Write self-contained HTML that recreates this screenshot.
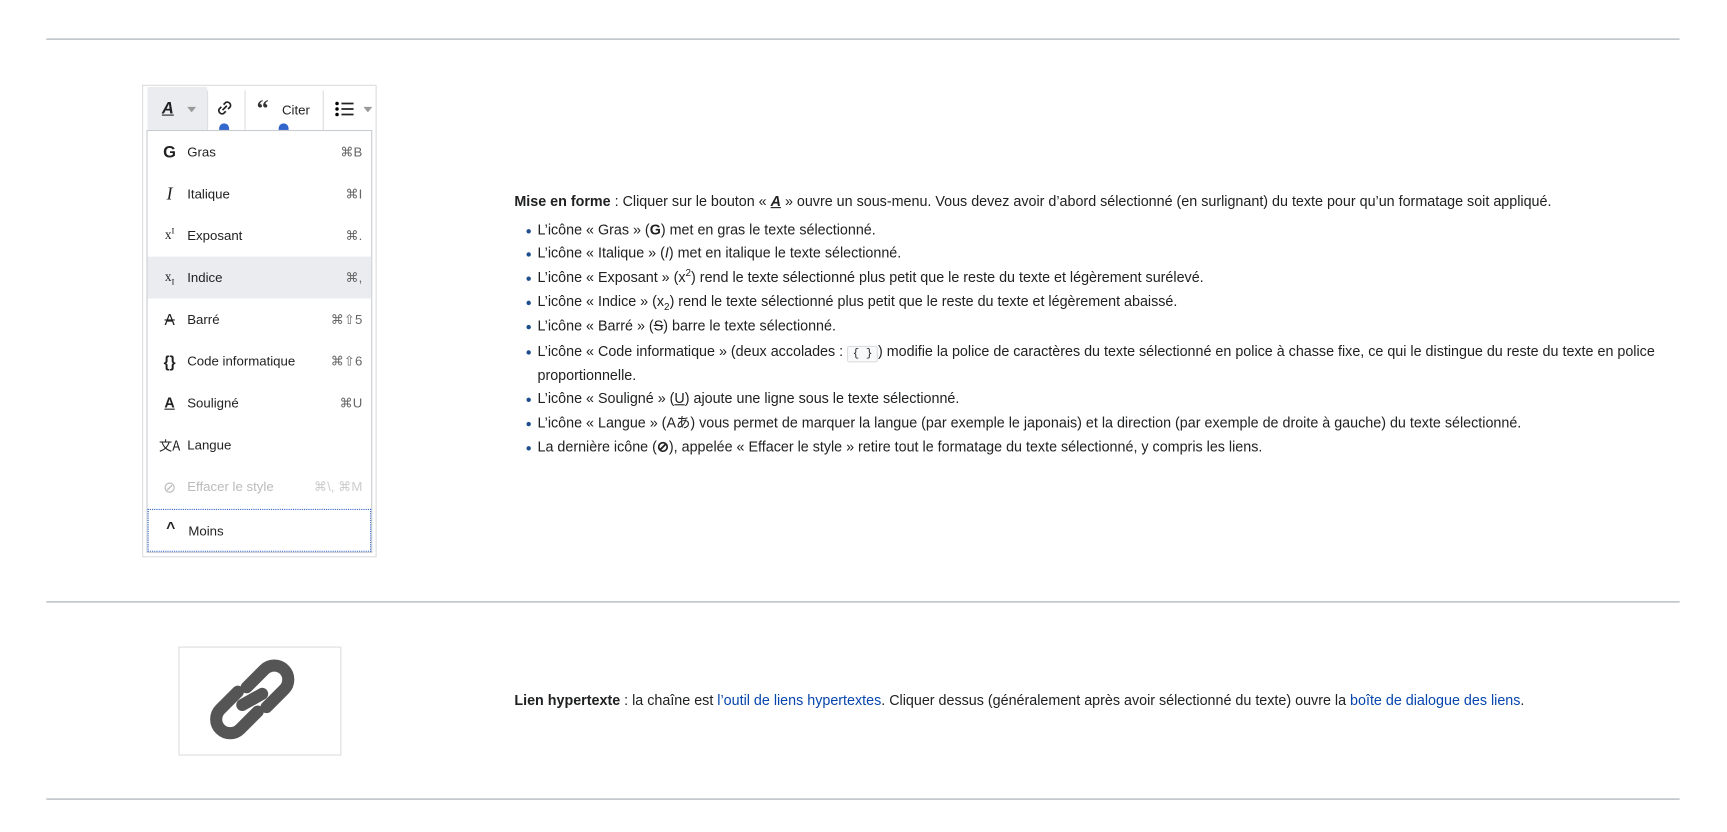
<!DOCTYPE html>
<html><head><meta charset="utf-8"><style>
body{margin:0;width:1727px;height:831px;background:#fff;font-family:"Liberation Sans",Arial,sans-serif;color:#202122;position:relative;overflow:hidden}
#w{position:absolute;left:0;top:0;width:1568px;height:755px;transform:scale(1.1014);transform-origin:0 0}
.hr{position:absolute;left:42px;width:1483px;height:1px;background:#a2a9b1}
.t{position:absolute;left:467px;font-size:13px;white-space:nowrap}
.li{position:absolute;left:488px;font-size:13px;white-space:nowrap}
.li:before{content:"";position:absolute;left:-10px;top:7px;width:4px;height:4px;border-radius:50%;background:#1f4e8c}
.li.nb:before{display:none}
sup,sub{line-height:0}
a{color:#0645ad;text-decoration:none}
.shot{position:absolute;left:129px;top:77px;width:211px;height:427px;border:1px solid #ddd;background:#fff}
.menu{position:absolute;left:133px;top:118px;width:203px;height:382px;border:1px solid #c8ccd1;background:#fff}
.it{position:absolute;left:0;width:203px;height:38px;font-size:12px;color:#222}
.it .ic{position:absolute;left:12px;top:11px;width:16px;text-align:center;font-size:14px}
.it .lb{position:absolute;left:36px;top:12px}
.it .k{position:absolute;right:8px;top:12px;color:#666;font-size:12px}
.code{font-family:"Liberation Mono",monospace;font-size:10px;border:1px solid #ddd;background:#f8f9fa;padding:1px 4px;border-radius:2px}
</style></head><body><div id="w">
<div class="hr" style="top:35px"></div>
<div class="hr" style="top:546px"></div>
<div class="hr" style="top:725px"></div>

<div class="shot">
 <div style="position:absolute;left:4px;top:1px;width:54px;height:40px;background:#eaecf0"></div>
 <div style="position:absolute;left:17px;top:12px;font-weight:bold;font-style:italic;font-size:15px;text-decoration:underline">A</div>
 <div style="position:absolute;left:40px;top:19px;border:4px solid transparent;border-top:5px solid #999"></div>
 <div style="position:absolute;left:58px;top:4px;width:1px;height:36px;background:#ddd"></div>
 <svg style="position:absolute;left:66px;top:12px" width="16" height="16" viewBox="0 0 16 16"><path d="M7 5 L9 3 a3 3 0 0 1 4 4 L11 9 M9 11 L7 13 a3 3 0 0 1 -4 -4 L5 7 M6 10 L10 6" stroke="#222" stroke-width="1.5" fill="none"/></svg>
 <div style="position:absolute;left:69px;top:34px;width:9px;height:6px;border-radius:5px 5px 0 0;background:#36c"></div>
 <div style="position:absolute;left:92px;top:4px;width:1px;height:36px;background:#ddd"></div>
 <div style="position:absolute;left:103px;top:8px;font-size:22px;font-weight:bold;color:#333;font-family:'Liberation Serif',serif">&#8220;</div>
 <div style="position:absolute;left:126px;top:15px;font-size:12px;color:#222">Citer</div>
 <div style="position:absolute;left:123px;top:34px;width:9px;height:6px;border-radius:5px 5px 0 0;background:#36c"></div>
 <div style="position:absolute;left:163px;top:4px;width:1px;height:36px;background:#ddd"></div>
 <svg style="position:absolute;left:174px;top:14px" width="18" height="14"><circle cx="2" cy="2" r="1.6"/><circle cx="2" cy="7" r="1.6"/><circle cx="2" cy="12" r="1.6"/><path d="M6 2H17M6 7H17M6 12H17" stroke="#222" stroke-width="1.6"/></svg>
 <div style="position:absolute;left:200px;top:19px;border:4px solid transparent;border-top:5px solid #999"></div>
</div>

<div class="menu">
 <div class="it" style="top:0"><span class="ic" style="font-weight:bold;font-size:15px">G</span><span class="lb">Gras</span><span class="k">⌘B</span></div>
 <div class="it" style="top:38px"><span class="ic" style="font-family:'Liberation Serif',serif;font-style:italic;font-size:16px">I</span><span class="lb">Italique</span><span class="k">⌘I</span></div>
 <div class="it" style="top:76px"><span class="ic" style="font-size:12px;font-family:'Liberation Serif',serif">x<sup style="font-size:8px">I</sup></span><span class="lb">Exposant</span><span class="k">⌘.</span></div>
 <div class="it" style="top:114px;background:#eaecf0"><span class="ic" style="font-size:12px;font-family:'Liberation Serif',serif">x<sub style="font-size:8px">I</sub></span><span class="lb">Indice</span><span class="k">⌘,</span></div>
 <div class="it" style="top:152px"><span class="ic" style="text-decoration:line-through">A</span><span class="lb">Barré</span><span class="k">⌘⇧5</span></div>
 <div class="it" style="top:190px"><span class="ic" style="font-weight:bold">{}</span><span class="lb">Code informatique</span><span class="k">⌘⇧6</span></div>
 <div class="it" style="top:228px"><span class="ic" style="text-decoration:underline;font-weight:bold;font-size:13px">A</span><span class="lb">Souligné</span><span class="k">⌘U</span></div>
 <div class="it" style="top:266px"><span class="ic" style="font-family:'Noto Sans CJK JP',sans-serif;font-size:12px;left:10px;width:20px">文A</span><span class="lb">Langue</span></div>
 <div class="it" style="top:304px;color:#bbb"><span class="ic" style="color:#bbb">⊘</span><span class="lb">Effacer le style</span><span class="k" style="color:#ccc">⌘\, ⌘M</span></div>
 <div class="it" style="top:343px;border:1px dotted #36c;box-sizing:border-box;height:39px"><span class="ic" style="font-weight:bold;top:8px">^</span><span class="lb">Moins</span></div>
</div>

<div class="t" style="top:175px"><b>Mise en forme</b> : Cliquer sur le bouton « <b><i><u>A</u></i></b> » ouvre un sous-menu. Vous devez avoir d’abord sélectionné (en surlignant) du texte pour qu’un formatage soit appliqué.</div>
<div class="li" style="top:201px">L’icône « Gras » (<b>G</b>) met en gras le texte sélectionné.</div>
<div class="li" style="top:222px">L’icône « Italique » (<i>I</i>) met en italique le texte sélectionné.</div>
<div class="li" style="top:244px">L’icône « Exposant » (x<sup style="font-size:9px">2</sup>) rend le texte sélectionné plus petit que le reste du texte et légèrement surélevé.</div>
<div class="li" style="top:266px">L’icône « Indice » (x<sub style="font-size:9px">2</sub>) rend le texte sélectionné plus petit que le reste du texte et légèrement abaissé.</div>
<div class="li" style="top:288px">L’icône « Barré » (<s>S</s>) barre le texte sélectionné.</div>
<div class="li" style="top:311px">L’icône « Code informatique » (deux accolades : <span class="code">{ }</span>) modifie la police de caractères du texte sélectionné en police à chasse fixe, ce qui le distingue du reste du texte en police</div>
<div class="li nb" style="top:333px">proportionnelle.</div>
<div class="li" style="top:354px">L’icône « Souligné » (<u>U</u>) ajoute une ligne sous le texte sélectionné.</div>
<div class="li" style="top:376px">L’icône « Langue » (A<span style="font-family:'Noto Sans CJK JP',sans-serif;line-height:0">あ</span>) vous permet de marquer la langue (par exemple le japonais) et la direction (par exemple de droite à gauche) du texte sélectionné.</div>
<div class="li" style="top:398px">La dernière icône (<b>⊘</b>), appelée « Effacer le style » retire tout le formatage du texte sélectionné, y compris les liens.</div>

<div style="position:absolute;left:162px;top:587px;width:146px;height:97px;border:1px solid #ddd"></div>
<svg style="position:absolute;left:186px;top:596px" width="86" height="78" viewBox="0 0 86 78">
 <g fill="none" stroke="#555" stroke-width="11" stroke-linecap="round">
  <path d="M38 28 L54 12 a12 12 0 0 1 18 18 L56 46"/>
  <path d="M48 50 L32 66 a12 12 0 0 1 -18 -18 L30 32"/>
  <path d="M34 44 L52 34"/>
 </g>
</svg>
<div class="t" style="top:628px"><b>Lien hypertexte</b> : la chaîne est <a>l’outil de liens hypertextes</a>. Cliquer dessus (généralement après avoir sélectionné du texte) ouvre la <a>boîte de dialogue des liens</a>.</div>
</div></body></html>
